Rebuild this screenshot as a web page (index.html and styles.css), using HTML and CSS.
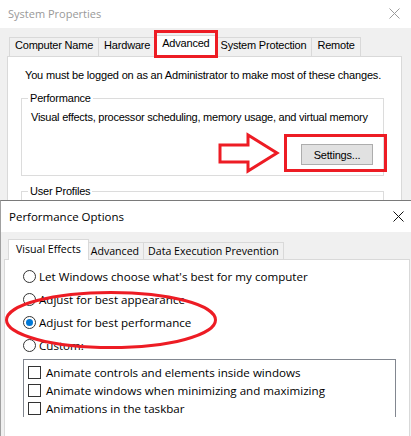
FILE: index.html
```html
<!DOCTYPE html>
<html>
<head>
<meta charset="utf-8">
<title>System Properties</title>
<link rel="stylesheet" href="styles.css">
</head>
<body>
<div class="win win-sys">
  <div class="titlebar">
    <span class="title inactive">System Properties</span>
    <svg class="close" width="11" height="11" viewBox="0 0 11 11"><path d="M0.5 0.5 L10.5 10.5 M10.5 0.5 L0.5 10.5" stroke="#9a9a9a" stroke-width="1" fill="none"/></svg>
  </div>
  <div class="client">
    <div class="tabs">
      <div class="tab">Computer Name</div>
      <div class="tab">Hardware</div>
      <div class="tab sel">Advanced<span class="mark mark-tab"></span></div>
      <div class="tab">System Protection</div>
      <div class="tab">Remote</div>
    </div>
    <div class="panel">
      <p class="note">You must be logged on as an Administrator to make most of these changes.</p>
      <fieldset class="group perf">
        <legend>Performance</legend>
        <p class="desc">Visual effects, processor scheduling, memory usage, and virtual memory</p>
        <div class="btn-row">
          <div class="btn-wrap">
            <svg class="arrow" width="64" height="42" viewBox="0 0 64 42"><polygon points="3,13 31,13 31,3 60,21 31,39 31,30 3,30" fill="none" stroke="#ed1c24" stroke-width="3" stroke-linejoin="miter"/></svg>
            <button class="btn">Settings...</button>
            <span class="mark mark-btn"></span>
          </div>
        </div>
      </fieldset>
      <fieldset class="group profiles">
        <legend>User Profiles</legend>
      </fieldset>
    </div>
  </div>
</div>

<div class="win win-perf">
  <div class="titlebar tb-perf">
    <span class="title">Performance Options</span>
    <svg class="close" width="11" height="11" viewBox="0 0 11 11"><path d="M0.5 0.5 L10.5 10.5 M10.5 0.5 L0.5 10.5" stroke="#111" stroke-width="1" fill="none"/></svg>
  </div>
  <div class="client">
    <div class="tabs">
      <div class="tab sel">Visual Effects</div>
      <div class="tab">Advanced</div>
      <div class="tab">Data Execution Prevention</div>
    </div>
    <div class="panel">
      <svg class="ellipse" width="230" height="100" viewBox="0 0 230 100"><ellipse cx="106" cy="60" rx="104.5" ry="27.5" fill="none" stroke="#ed1c24" stroke-width="3"/></svg>
      <div class="radios">
        <label class="opt"><span class="radio"></span>Let Windows choose what's best for my computer</label>
        <label class="opt"><span class="radio"></span>Adjust for best appearance</label>
        <label class="opt"><span class="radio checked"></span>Adjust for best performance</label>
        <label class="opt"><span class="radio"></span>Custom:</label>
      </div>
      <div class="listbox">
        <div class="item"><span class="check"></span>Animate controls and elements inside windows</div>
        <div class="item"><span class="check"></span>Animate windows when minimizing and maximizing</div>
        <div class="item"><span class="check"></span>Animations in the taskbar</div>
      </div>
    </div>
  </div>
</div>
</body>
</html>
```

FILE: styles.css
```css
* { box-sizing: border-box; }

body {
  margin: 0;
  width: 411px;
  height: 436px;
  overflow: hidden;
  background: #f0f0f0;
  font-family: "Liberation Sans", Arial, sans-serif;
  font-size: 11px;
  letter-spacing: -0.2px;
  color: #000;
}

.win { background: #f0f0f0; overflow: hidden; }

.titlebar {
  background: #fff;
  display: flex;
  align-items: center;
  justify-content: space-between;
  letter-spacing: 0;
}

.title {
  font-family: "Open Sans", "Noto Sans", sans-serif;
  font-size: 11px;
}
.title.inactive { color: #999; }

/* ---------- System Properties ---------- */
.win-sys { height: 200px; }
.win-sys .titlebar { height: 28px; padding: 0 11px 2px 8px; }

.win-sys .client { padding: 7px 9px 0 7px; }

.tabs {
  display: flex;
  align-items: flex-end;
}
.win-sys .tabs { height: 21px; padding-left: 3px; }

.tab {
  position: relative;
  border: 1px solid #d9d9d9;
  border-bottom: 0;
  background: #f0f0f0;
  white-space: nowrap;
  margin-left: -1px;
}
.win-sys .tab { height: 19px; line-height: 15px; padding: 0 5px; }
.win-sys .tab.sel {
  height: 22px;
  margin: 0 -2px -1px -2px;
  padding: 0 7px;
  background: #fff;
  z-index: 1;
}

.mark { position: absolute; border: 3px solid #ed1c24; pointer-events: none; }
.mark-tab { left: -1px; right: -1px; top: -6px; bottom: -1px; }

.panel {
  background: #fff;
  border: 1px solid #d9d9d9;
  position: relative;
}
.win-sys .panel { height: 200px; padding-top: 12px; }

.note { margin: 0 0 0 17px; line-height: 13px; letter-spacing: -0.17px; }

.group {
  border: 1px solid #dcdcdc;
  margin: 10px 17px 0 13px;
  padding: 6px 10px 10px 6px;
  min-width: 0;
}
.group legend { padding: 0 2px; line-height: 13px; }
.desc { margin: 0 0 0 3px; line-height: 13px; white-space: nowrap; letter-spacing: -0.24px; }

.btn-row { display: flex; justify-content: flex-end; margin-top: 20px; }
.btn-wrap { position: relative; }
.btn {
  width: 72px;
  height: 21px;
  background: #e1e1e1;
  border: 1px solid #adadad;
  font: inherit;
  letter-spacing: inherit;
  color: #000;
  padding: 0;
}
.arrow { position: absolute; left: -84px; top: -12px; }
.mark-btn { left: -17px; top: -10px; width: 103px; height: 38px; }

.profiles { margin-top: 9px; height: 60px; }

/* ---------- Performance Options ---------- */
.win-perf {
  height: 236px;
  border-top: 1px solid #7a7a7a;
  border-left: 1px solid #a0a0a0;
  font-family: "Open Sans", "Noto Sans", sans-serif;
  font-size: 11.6px;
  letter-spacing: 0;
}
.tb-perf { height: 31px; padding: 0 7px 1px 8px; }
.tb-perf .title { color: #000; font-size: 11.5px; }

.win-perf .client { padding: 7px 1px 0 3px; }
.win-perf .tabs { height: 20px; padding-left: 6px; font-size: 10.6px; }
.win-perf .tab { height: 17px; line-height: 16px; padding: 0 4px; }
.win-perf .tab.sel {
  height: 21px;
  line-height: 19px;
  margin: 0 -2px -1px -2px;
  padding: 0 7px;
  background: #fff;
  z-index: 1;
}
.win-perf .panel { height: 200px; padding-top: 5px; }

.ellipse { position: absolute; left: 0; top: 0; pointer-events: none; }

.opt {
  display: flex;
  align-items: center;
  height: 23px;
  padding-left: 18px;
  white-space: nowrap;
}
.radio {
  width: 13px;
  height: 13px;
  border: 1px solid #333;
  border-radius: 50%;
  background: #fff;
  margin-right: 3px;
  display: flex;
  align-items: center;
  justify-content: center;
  flex: none;
}
.radio.checked::after {
  content: "";
  width: 7px;
  height: 7px;
  border-radius: 50%;
  background: #0078d7;
}

.listbox {
  margin: 2px 0 0 18px;
  width: 373px;
  height: 58px;
  border: 1px solid #828790;
  border-bottom: 0;
  padding: 3px 0 0 4px;
}
.item { display: flex; align-items: center; height: 18px; white-space: nowrap; }
.check {
  width: 13px;
  height: 13px;
  border: 1px solid #333;
  background: #fff;
  margin-right: 5px;
  flex: none;
}
```
